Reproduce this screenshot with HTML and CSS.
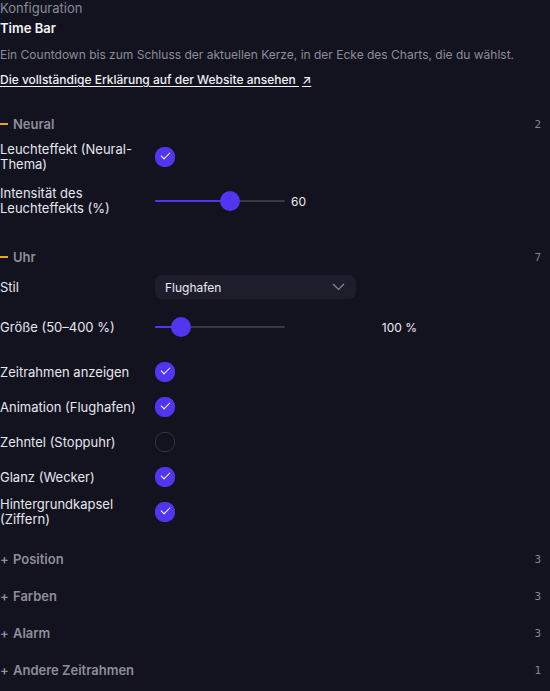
FILE: index.html
```html
<!DOCTYPE html>
<html lang="de">
<head>
    <meta charset="UTF-8">
    <meta name="viewport" content="width=device-width, initial-scale=1.0">
    <title>Time Bar – Konfiguration</title>
    <link rel="stylesheet" href="styles.css">
</head>
<body>
    <div class="panel">

        <div class="intro">
            <div class="eyebrow">Konfiguration</div>
            <div class="title">Time Bar</div>
            <p class="desc">Ein Countdown bis zum Schluss der aktuellen Kerze, in der Ecke des Charts, die du wählst.</p>
            <a class="doc-link" href="#">Die vollständige Erklärung auf der Website ansehen <span class="arrow">↗</span></a>
        </div>

        <!-- Neural -->
        <div class="section open">
            <div class="section-head">
                <span class="toggle dash"></span>
                <span class="section-name">Neural</span>
                <span class="count">2</span>
            </div>
            <div class="section-body neural">
                <div class="row">
                    <span class="label">Leuchteffekt (Neural-Thema)</span>
                    <span class="check on"></span>
                </div>
                <div class="row row-slider first-slider">
                    <span class="label">Intensität des Leuchteffekts (%)</span>
                    <div class="slider-group">
                        <div class="slider">
                            <div class="fill" style="width: 58%"></div>
                            <div class="thumb" style="left: 58%"></div>
                        </div>
                        <span class="value">60</span>
                    </div>
                </div>
            </div>
        </div>

        <!-- Uhr -->
        <div class="section open">
            <div class="section-head">
                <span class="toggle dash"></span>
                <span class="section-name">Uhr</span>
                <span class="count">7</span>
            </div>
            <div class="section-body">
                <div class="row">
                    <span class="label">Stil</span>
                    <div class="select">
                        <span>Flughafen</span>
                        <svg class="chevron" width="13" height="8" viewBox="0 0 13 8"><path d="M1 1l5.5 5.5L12 1" fill="none" stroke="#8a8996" stroke-width="1.2"/></svg>
                    </div>
                </div>
                <div class="row row-slider">
                    <span class="label">Größe (50–400 %)</span>
                    <div class="slider-group wide">
                        <div class="slider">
                            <div class="fill" style="width: 20%"></div>
                            <div class="thumb" style="left: 20%"></div>
                        </div>
                        <span class="value">100 %</span>
                    </div>
                </div>
                <div class="row">
                    <span class="label">Zeitrahmen anzeigen</span>
                    <span class="check on"></span>
                </div>
                <div class="row">
                    <span class="label">Animation (Flughafen)</span>
                    <span class="check on"></span>
                </div>
                <div class="row">
                    <span class="label">Zehntel (Stoppuhr)</span>
                    <span class="check"></span>
                </div>
                <div class="row">
                    <span class="label">Glanz (Wecker)</span>
                    <span class="check on"></span>
                </div>
                <div class="row">
                    <span class="label">Hintergrundkapsel (Ziffern)</span>
                    <span class="check on"></span>
                </div>
            </div>
        </div>

        <div class="section">
            <div class="section-head">
                <span class="toggle">+</span>
                <span class="section-name">Position</span>
                <span class="count">3</span>
            </div>
        </div>
        <div class="section">
            <div class="section-head">
                <span class="toggle">+</span>
                <span class="section-name">Farben</span>
                <span class="count">3</span>
            </div>
        </div>
        <div class="section">
            <div class="section-head">
                <span class="toggle">+</span>
                <span class="section-name">Alarm</span>
                <span class="count">3</span>
            </div>
        </div>
        <div class="section">
            <div class="section-head">
                <span class="toggle">+</span>
                <span class="section-name">Andere Zeitrahmen</span>
                <span class="count">1</span>
            </div>
        </div>

    </div>
</body>
</html>
```

FILE: styles.css
```css
* {
    margin: 0;
    padding: 0;
    box-sizing: border-box;
}

body {
    background-color: #13131f;
    color: #e6e6ee;
    font-family: Inter, "Noto Sans", sans-serif;
    font-size: 13px;
    line-height: 15px;
}

.panel {
    padding: 0 9px 0 0;
}

.intro {
    margin-bottom: 21px;
}

.eyebrow {
    color: #8b8a97;
    font-size: 13px;
    line-height: 16px;
}

.title {
    margin-top: 4px;
    font-weight: 600;
    line-height: 16px;
    color: #f4f4f8;
}

.desc {
    margin-top: 11px;
    font-size: 12px;
    line-height: 16px;
    color: #8d8c99;
}

.doc-link {
    display: inline-block;
    margin-top: 9px;
    font-size: 12px;
    line-height: 16px;
    font-weight: 500;
    color: #f0f0f5;
    text-decoration: underline;
    text-underline-offset: 2px;
}

.doc-link .arrow {
    margin-left: 3px;
}

/* sections */

.section {
    margin-top: 7px;
}

.section-head {
    display: flex;
    align-items: center;
    height: 30px;
    font-size: 13px;
    font-weight: 600;
    color: #8e8d99;
}

.toggle {
    width: 13px;
    font-size: 13px;
    color: #8e8d99;
    font-weight: 600;
}

.toggle.dash {
    position: relative;
    height: 16px;
}

.toggle.dash::before {
    content: "";
    position: absolute;
    left: 0;
    top: 7px;
    width: 8px;
    height: 2px;
    background-color: #f2a21c;
}

.section-name {
    flex: 1;
}

.count {
    font-family: "DejaVu Sans Mono", monospace;
    font-weight: 400;
    font-size: 11px;
    color: #85848f;
}

.section-body {
    display: flex;
    flex-direction: column;
    gap: 5px;
    padding-bottom: 10px;
}

.section-body.neural {
    margin-top: 3px;
    padding-bottom: 9px;
}

.row {
    display: flex;
    align-items: center;
    min-height: 30px;
}

.label {
    width: 155px;
    flex-shrink: 0;
    padding-right: 8px;
}

.row-slider {
    margin-top: 5px;
    margin-bottom: 10px;
}

.first-slider {
    margin-top: 9px;
}

/* controls */

.check {
    width: 20px;
    height: 20px;
    border-radius: 9px;
    border: 1px solid #34333f;
    position: relative;
}

.check.on {
    background-color: #5036f0;
    border-color: #5036f0;
}

.check.on::after {
    content: "";
    position: absolute;
    left: 5px;
    top: 4px;
    width: 8px;
    height: 4px;
    border-left: 1.7px solid #fff;
    border-bottom: 1.7px solid #fff;
    transform: rotate(-45deg);
}

.slider-group {
    display: flex;
    align-items: center;
    gap: 6px;
}

.slider-group.wide {
    width: 262px;
    justify-content: space-between;
}

.slider {
    position: relative;
    width: 130px;
    height: 2px;
    background-color: #393845;
    border-radius: 1px;
}

.fill {
    height: 2px;
    background-color: #5036f0;
    border-radius: 1px;
}

.thumb {
    position: absolute;
    top: -9px;
    width: 20px;
    height: 20px;
    margin-left: -10px;
    border-radius: 50%;
    background-color: #5036f0;
}

.value {
    font-size: 12px;
    color: #ecebf2;
}

.select {
    display: flex;
    align-items: center;
    justify-content: space-between;
    width: 201px;
    height: 24px;
    padding: 0 11px 0 10px;
    background-color: #1e1d2c;
    border-radius: 7px;
    font-size: 12px;
    color: #ecebf2;
}
```
